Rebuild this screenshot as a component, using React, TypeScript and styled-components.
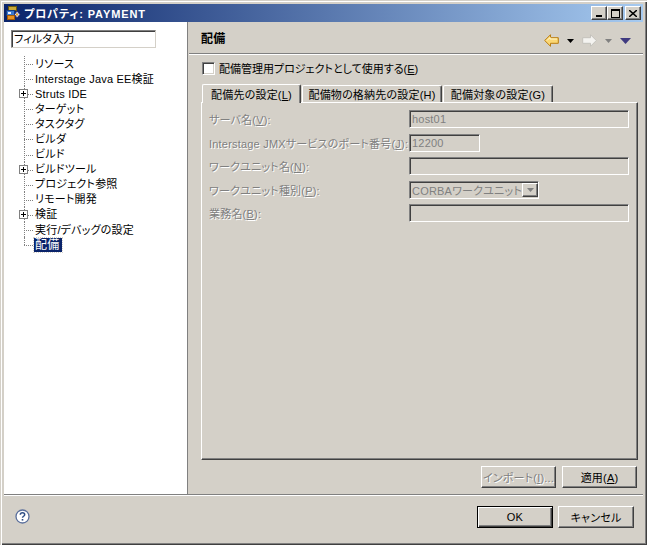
import React from "react";
import styled, { createGlobalStyle } from "styled-components";

const FONT = `"Liberation Sans", "Noto Sans CJK JP", sans-serif`;

const GlobalStyle = createGlobalStyle`
  html, body {
    margin: 0;
    padding: 0;
    background: #d4d0c8;
  }
  * {
    box-sizing: border-box;
  }
`;

const Window = styled.div`
  width: 647px;
  height: 545px;
  display: flex;
  flex-direction: column;
  padding: 4px;
  background: #d4d0c8;
  font-family: ${FONT};
  font-size: 11px;
  letter-spacing: 0.2px;
  font-feature-settings: "palt";
  color: #000;
  box-shadow: inset 1px 1px 0 #d4d0c8, inset 2px 2px 0 #fff, inset -1px -1px 0 #404040, inset -2px -2px 0 #808080;
  overflow: hidden;
`;

const TitleBar = styled.div`
  height: 18px;
  flex: none;
  display: flex;
  align-items: center;
  padding: 0 2px 0 1px;
  background: linear-gradient(90deg, #0a246a 0%, #a6caf0 100%);
`;

const TitleText = styled.span`
  flex: 1;
  margin-left: 3px;
  color: #fff;
  font-weight: bold;
  font-size: 11px;
  letter-spacing: 0.9px;
  white-space: nowrap;
`;

const CaptionButton = styled.button<{ $gap?: boolean }>`
  width: 16px;
  height: 14px;
  padding: 0;
  margin-left: ${(p) => (p.$gap ? "2px" : "0")};
  display: flex;
  align-items: center;
  justify-content: center;
  background: #d4d0c8;
  border: 1px solid;
  border-color: #fff #404040 #404040 #fff;
  box-shadow: inset -1px -1px 0 #808080;
`;

const Body = styled.div`
  height: 473px;
  flex: none;
  display: flex;
  border-bottom: 1px solid #808080;
`;

const Sidebar = styled.div`
  width: 183px;
  flex: none;
  background: #fff;
  padding: 8px 0 0 7px;
`;

const FilterInput = styled.div`
  width: 145px;
  height: 18px;
  display: flex;
  align-items: center;
  padding-left: 2px;
  line-height: 14px;
  background: #fff;
  border: 1px solid;
  border-color: #808080 #d4d0c8 #d4d0c8 #808080;
  box-shadow: inset 1px 1px 0 #404040;
`;

const Tree = styled.ul`
  list-style: none;
  margin: 8px 0 0;
  padding: 0;
`;

const TreeRow = styled.li<{ $last?: boolean }>`
  position: relative;
  height: 15.1px;
  display: flex;
  align-items: center;
  padding-left: 23px;
  white-space: nowrap;

  &::before {
    content: "";
    position: absolute;
    left: 13px;
    top: 0;
    height: ${(p) => (p.$last ? "8px" : "100%")};
    border-left: 1px dotted #808080;
  }

  &::after {
    content: "";
    position: absolute;
    left: 13px;
    top: 8px;
    width: 9px;
    border-top: 1px dotted #808080;
  }
`;

const Expander = styled.span`
  position: absolute;
  z-index: 1;
  left: 8px;
  top: 3px;
  width: 9px;
  height: 9px;
  background: #fff;
  border: 1px solid #808080;

  &::before {
    content: "";
    position: absolute;
    left: 1px;
    top: 3px;
    width: 5px;
    height: 1px;
    background: #000;
  }

  &::after {
    content: "";
    position: absolute;
    left: 3px;
    top: 1px;
    width: 1px;
    height: 5px;
    background: #000;
  }
`;

const TreeLabel = styled.span<{ $selected?: boolean }>`
  padding: 0 ${(p) => (p.$selected ? "3px" : "1px")} 0 1px;
  line-height: 14px;
  font-size: ${(p) => (p.$selected ? "12px" : "11px")};
  color: ${(p) => (p.$selected ? "#fff" : "#000")};
  background: ${(p) => (p.$selected ? "#0a246a" : "transparent")};
  outline: ${(p) => (p.$selected ? "1px dotted #d4d0c8" : "none")};
`;

const Sash = styled.div`
  width: 2px;
  flex: none;
  background: #d4d0c8;
  border-left: 1px solid #808080;
`;

const Main = styled.div`
  flex: 1;
  min-width: 0;
  display: flex;
  flex-direction: column;
`;

const PageHeader = styled.div`
  height: 32px;
  flex: none;
  display: flex;
  align-items: center;
  justify-content: space-between;
  padding: 0 12px 0 12px;
  border-bottom: 1px solid #808080;
  box-shadow: 0 1px 0 #fff;
`;

const PageTitle = styled.h2`
  margin: 0;
  font-size: 12px;
  font-weight: bold;
`;

const NavIcons = styled.div`
  display: flex;
  align-items: center;
  gap: 8px;
  margin-top: 6px;
`;

const Content = styled.div`
  flex: 1;
  display: flex;
  flex-direction: column;
  padding: 7px 5px 0 12px;
`;

const CheckRow = styled.label`
  display: flex;
  align-items: center;
  gap: 4px;
  height: 14px;
  margin-left: 1px;
  white-space: nowrap;
  letter-spacing: 0;
`;

const CheckBox = styled.span`
  width: 13px;
  height: 13px;
  background: #fff;
  border: 1px solid;
  border-color: #808080 #fff #fff #808080;
  box-shadow: inset 1px 1px 0 #404040, inset -1px -1px 0 #d4d0c8;
`;

const TabStrip = styled.div`
  display: flex;
  align-items: flex-end;
  height: 19px;
  margin-top: 8px;
  padding-left: 1px;
`;

const Tab = styled.div<{ $active?: boolean; $width: number }>`
  position: relative;
  z-index: ${(p) => (p.$active ? 1 : 0)};
  width: ${(p) => p.$width}px;
  height: ${(p) => (p.$active ? "19px" : "17px")};
  margin-bottom: ${(p) => (p.$active ? "-1px" : "0")};
  margin-left: ${(p) => (p.$active ? "0" : "1px")};
  display: flex;
  align-items: center;
  justify-content: center;
  white-space: nowrap;
  background: #d4d0c8;
  border: 1px solid;
  border-color: #fff #404040 transparent #fff;
  border-bottom: none;
  border-radius: 2px 2px 0 0;
  box-shadow: inset -1px 0 0 #808080;
`;

const TabFolder = styled.div`
  height: 358px;
  flex: none;
  display: grid;
  grid-template-columns: 200px 220px;
  grid-auto-rows: 18px;
  row-gap: 5.5px;
  align-content: start;
  padding: 7px 0 0 7px;
  border: 1px solid;
  border-color: #fff #404040 #404040 #fff;
  box-shadow: inset -1px -1px 0 #808080;
`;

const FieldLabel = styled.span`
  display: flex;
  align-items: center;
  white-space: pre;
  color: #808080;
  text-shadow: 1px 1px 0 #fff;
`;

const Field = styled.div<{ $width?: number }>`
  width: ${(p) => (p.$width ? `${p.$width}px` : "100%")};
  height: 18px;
  display: flex;
  align-items: center;
  padding-left: 2px;
  white-space: nowrap;
  color: #808080;
  background: #d4d0c8;
  border: 1px solid;
  border-color: #808080 #fff #fff #808080;
  box-shadow: inset 1px 1px 0 #404040;
`;

const ComboArrow = styled.span`
  width: 16px;
  height: 14px;
  margin-left: auto;
  margin-right: 1px;
  flex: none;
  display: flex;
  align-items: center;
  justify-content: center;
  border: 1px solid;
  border-color: #fff #404040 #404040 #fff;
  box-shadow: inset -1px -1px 0 #808080;
`;

const PageButtons = styled.div`
  display: flex;
  justify-content: flex-end;
  gap: 6px;
  margin-top: 6px;
  padding-right: 1px;
`;

const PushButton = styled.button<{ $disabled?: boolean; $default?: boolean }>`
  width: 75px;
  height: 22px;
  padding: 0;
  font-family: ${FONT};
  font-size: 11px;
  letter-spacing: 0.2px;
  font-feature-settings: "palt";
  white-space: nowrap;
  color: ${(p) => (p.$disabled ? "#808080" : "#000")};
  text-shadow: ${(p) => (p.$disabled ? "1px 1px 0 #fff" : "none")};
  background: #d4d0c8;
  border: 1px solid;
  border-color: ${(p) => (p.$default ? "#000" : "#fff #404040 #404040 #fff")};
  box-shadow: ${(p) =>
    p.$default
      ? "inset 1px 1px 0 #fff, inset -1px -1px 0 #404040, inset -2px -2px 0 #808080"
      : "inset -1px -1px 0 #808080"};
`;

const FooterButton = styled(PushButton)`
  width: 76px;
`;

const Footer = styled.div`
  flex: 1;
  display: flex;
  align-items: center;
  justify-content: space-between;
  padding: 0 9px 4px 11px;
  border-top: 1px solid #fff;
`;

const FooterButtons = styled.div`
  display: flex;
  gap: 5px;
`;

const Shortcut = styled.span`
  text-decoration: underline;
`;

const treeItems = [
  { label: "リソース" },
  { label: "Interstage Java EE検証" },
  { label: "Struts IDE", expand: true },
  { label: "ターゲット" },
  { label: "タスクタグ" },
  { label: "ビルダ" },
  { label: "ビルド" },
  { label: "ビルドツール", expand: true },
  { label: "プロジェクト参照" },
  { label: "リモート開発" },
  { label: "検証", expand: true },
  { label: "実行/デバッグの設定" },
  { label: "配備", selected: true },
];

const AppIcon = () => (
  <svg width="16" height="16" viewBox="0 0 16 16">
    <rect x="3.500" y="1.500" width="8" height="4" fill="#c8a838" stroke="#6b5a10" />
    <rect x="1.500" y="5.500" width="8" height="5" fill="#3a78d0" stroke="#143c80" />
    <rect x="3" y="7" width="3" height="2" fill="#e8f0ff" />
    <rect x="2.500" y="10.500" width="7" height="4" fill="#e89020" stroke="#a05808" />
    <path d="M12 6l3 3.500L12 13 9.500 9.500z" fill="#e0e0f0" stroke="#303070" />
    <rect x="11" y="8.500" width="2" height="2" fill="#e8a020" />
  </svg>
);

const BackIcon = () => (
  <svg width="15" height="13" viewBox="0 0 15 13">
    <path d="M.7 6.500L6.500.7v3h7.800v5.600H6.500v3z" fill="#fbd774" stroke="#b97c10" />
    <path d="M3 6.500L6 3.500v1.500h7" fill="none" stroke="#fff6cc" />
  </svg>
);

const ForwardIcon = () => (
  <svg width="15" height="13" viewBox="0 0 15 13">
    <path d="M14.300 6.500L8.500.7v3H.7v5.600h7.800v3z" fill="#f4f3f0" stroke="#c4c2bc" />
  </svg>
);

const SmallDrop = ({ color }: { color: string }) => (
  <svg width="7" height="4" viewBox="0 0 7 4">
    <path d="M0 0h7L3.500 4z" fill={color} />
  </svg>
);

const MenuDrop = () => (
  <svg width="11" height="6" viewBox="0 0 11 6">
    <path d="M0 0h11L5.500 6z" fill="#3f3a80" />
  </svg>
);

const HelpIcon = () => (
  <svg width="15" height="15" viewBox="0 0 15 15">
    <circle cx="7.500" cy="7.500" r="6.500" fill="#fff" stroke="#5a6f9c" strokeWidth="1.300" />
    <path
      d="M5.300 5.800c0-1.300 1-2 2.200-2s2.200.7 2.200 1.900c0 1.500-2.200 1.600-2.200 3.100"
      fill="none"
      stroke="#2f4f86"
      strokeWidth="1.500"
    />
    <rect x="6.700" y="10" width="1.600" height="1.600" fill="#2f4f86" />
  </svg>
);

const App: React.FC = () => {
  return (
    <Window>
      <GlobalStyle />
      <TitleBar>
        <AppIcon />
        <TitleText>プロパティ: PAYMENT</TitleText>
        <CaptionButton>
          <svg width="8" height="8" viewBox="0 0 8 8">
            <rect x="1" y="6" width="6" height="2" fill="#000" />
          </svg>
        </CaptionButton>
        <CaptionButton>
          <svg width="9" height="9" viewBox="0 0 9 9">
            <path d="M0 0h9v9H0zM1 2v6h7V2z" fill="#000" fillRule="evenodd" />
          </svg>
        </CaptionButton>
        <CaptionButton $gap>
          <svg width="8" height="7" viewBox="0 0 8 7">
            <path d="M0 0l8 7M8 0L0 7" stroke="#000" strokeWidth="1.500" />
          </svg>
        </CaptionButton>
      </TitleBar>
      <Body>
        <Sidebar>
          <FilterInput>フィルタ入力</FilterInput>
          <Tree>
            {treeItems.map((item, i) => (
              <TreeRow key={item.label} $last={i === treeItems.length - 1}>
                {item.expand && <Expander />}
                <TreeLabel $selected={item.selected}>{item.label}</TreeLabel>
              </TreeRow>
            ))}
          </Tree>
        </Sidebar>
        <Sash />
        <Main>
          <PageHeader>
            <PageTitle>配備</PageTitle>
            <NavIcons>
              <BackIcon />
              <SmallDrop color="#000" />
              <ForwardIcon />
              <SmallDrop color="#808080" />
              <MenuDrop />
            </NavIcons>
          </PageHeader>
          <Content>
            <CheckRow>
              <CheckBox />
              <span>
                配備管理用プロジェクトとして使用する(<Shortcut>E</Shortcut>)
              </span>
            </CheckRow>
            <TabStrip>
              <Tab $active $width={99}>
                <span>
                  配備先の設定(<Shortcut>L</Shortcut>)
                </span>
              </Tab>
              <Tab $width={140}>配備物の格納先の設定(H)</Tab>
              <Tab $width={110}>配備対象の設定(G)</Tab>
            </TabStrip>
            <TabFolder>
              <FieldLabel>
                <span>
                  サーバ名(<Shortcut>V</Shortcut>):
                </span>
              </FieldLabel>
              <Field>host01</Field>
              <FieldLabel>
                <span>
                  Interstage JMXサービスのポート番号(<Shortcut>J</Shortcut>):
                </span>
              </FieldLabel>
              <Field $width={71}>12200</Field>
              <FieldLabel>
                <span>
                  ワークユニット名(<Shortcut>N</Shortcut>):
                </span>
              </FieldLabel>
              <Field />
              <FieldLabel>
                <span>
                  ワークユニット種別(<Shortcut>P</Shortcut>):
                </span>
              </FieldLabel>
              <Field $width={130}>
                CORBAワークユニット
                <ComboArrow>
                  <SmallDrop color="#808080" />
                </ComboArrow>
              </Field>
              <FieldLabel>
                <span>
                  業務名(<Shortcut>B</Shortcut>):
                </span>
              </FieldLabel>
              <Field />
            </TabFolder>
            <PageButtons>
              <PushButton $disabled>
                インポート(<Shortcut>I</Shortcut>)...
              </PushButton>
              <PushButton>
                適用(<Shortcut>A</Shortcut>)
              </PushButton>
            </PageButtons>
          </Content>
        </Main>
      </Body>
      <Footer>
        <HelpIcon />
        <FooterButtons>
          <FooterButton $default>OK</FooterButton>
          <FooterButton>キャンセル</FooterButton>
        </FooterButtons>
      </Footer>
    </Window>
  );
};

export default App;
